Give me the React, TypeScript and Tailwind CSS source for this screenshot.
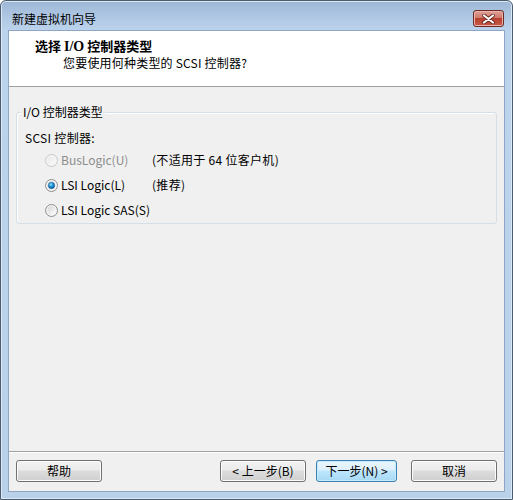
import React from "react";

const cjk = { fontFamily: '"Noto Sans CJK SC", "Noto Sans", sans-serif' };

function Radio({ checked, disabled }: { checked?: boolean; disabled?: boolean }) {
  return (
    <svg width="13" height="13" viewBox="0 0 13 13" className="shrink-0">
      <defs>
        <linearGradient id={`rg${checked ? 1 : 0}${disabled ? 1 : 0}`} x1="0" y1="0" x2="1" y2="1">
          <stop offset="0" stopColor={disabled ? "#e8e8e8" : "#d4d4d4"} />
          <stop offset="1" stopColor={disabled ? "#fbfbfb" : "#ffffff"} />
        </linearGradient>
        <radialGradient id="dot" cx="0.4" cy="0.35" r="0.7">
          <stop offset="0" stopColor="#8ee0ff" />
          <stop offset="0.5" stopColor="#1c8ed4" />
          <stop offset="1" stopColor="#0b4f8a" />
        </radialGradient>
      </defs>
      <circle cx="6.5" cy="6.5" r="6" fill={disabled ? "#f4f4f4" : "#f2f2f2"} stroke={disabled ? "#c8c8c8" : "#8e8f8f"} strokeWidth="1" />
      <circle cx="6.5" cy="6.5" r="4.2" fill={`url(#rg${checked ? 1 : 0}${disabled ? 1 : 0})`} />
      {checked && <circle cx="6.5" cy="6.5" r="3.2" fill="url(#dot)" stroke="#1d5a8c" strokeWidth="0.5" />}
    </svg>
  );
}

function Btn({ children, def, w }: { children: React.ReactNode; def?: boolean; w: string }) {
  return (
    <div
      className={`${w} h-[22px] rounded-[3px] border flex items-center justify-center text-[12px] text-black ${
        def
          ? "border-[#3c7fb1] bg-[linear-gradient(#ecf6fc_0%,#dcf0fb_45%,#bde6fd_50%,#a7d9f5_100%)] shadow-[inset_0_0_0_1px_#c5ecfc]"
          : "border-[#707070] bg-[linear-gradient(#f2f2f2_0%,#ebebeb_45%,#dddddd_50%,#cfcfcf_100%)] shadow-[inset_0_0_0_1px_#fcfcfc]"
      }`}
      style={cjk}
    >
      {children}
    </div>
  );
}

export default function App() {
  return (
    <div className="w-[513px] h-[500px] relative overflow-hidden bg-white">
      <div className="w-[513px] h-[500px] flex flex-col rounded-t-[6px] border border-[#4d5d70] bg-[linear-gradient(180deg,#9cb7d6_0px,#b4cbe6_20px,#bcd3ec_30px,#bad1ea_100%)] shadow-[inset_0_0_0_1px_#dbe8f5]">
        <div className="h-[29px] flex items-start justify-between pl-[11px] pr-[8px] shrink-0">
          <div className="pt-[10px] text-[12px] leading-[16px] text-black" style={cjk}>
            新建虚拟机向导
          </div>
          <div className="mt-[9px] w-[31px] h-[17px] rounded-[3px] border border-[#6f2a23] bg-[linear-gradient(#e0a197_0%,#cf7a6c_45%,#b8402f_50%,#c55a48_100%)] flex items-center justify-center shadow-[inset_0_0_0_1px_#e9b4ab]">
            <svg width="13" height="10" viewBox="0 0 13 10">
              <path d="M2 1.5 L11 8.5 M11 1.5 L2 8.5" stroke="#5a1f18" strokeWidth="3.6" strokeLinecap="round" />
              <path d="M2 1.5 L11 8.5 M11 1.5 L2 8.5" stroke="#ffffff" strokeWidth="2.2" strokeLinecap="round" />
            </svg>
          </div>
        </div>
        <div className="flex-1 px-[7px] pb-[7px] flex">
          <div className="flex-1 flex flex-col bg-[#f0f0f0] border border-[#8ea6c3]">
            <div className="h-[56px] bg-white border-b border-[#a0a0a0] shrink-0 relative">
              <div
                className="absolute left-[26px] top-[6px] text-[13px] font-bold leading-[18px] text-black"
                style={{ fontFamily: '"Noto Sans CJK SC", sans-serif' }}
              >
                选择 <span style={{ fontFamily: '"Liberation Serif", serif' }} className="text-[14px]">I/O</span> 控制器类型
              </div>
              <div className="absolute left-[54px] top-[24px] text-[12px] leading-[16px] text-black tracking-[0.2px]" style={cjk}>
                您要使用何种类型的 SCSI 控制器?
              </div>
            </div>
            <div className="flex-1 px-[7px] pt-[25px] flex flex-col">
              <div className="relative h-[112px] rounded-[3px] border border-[#d5dfe5] shadow-[inset_1px_1px_0_#ffffff] ">
                <div className="absolute left-[4px] -top-[10px] px-[2px] bg-[#f0f0f0] text-[12px] leading-[18px] text-black" style={cjk}>
                  I/O 控制器类型
                </div>
                <div className="pl-[8px] pt-[16px] text-[12px] leading-[18px] text-black tracking-[0.3px]" style={cjk}>
                  SCSI 控制器:
                </div>
                <div className="pl-[28px] pt-[4px] flex flex-col gap-[7px]">
                  <div className="flex items-center h-[18px]">
                    <Radio disabled />
                    <span className="ml-[3px] w-[93px] text-[12px] text-[#8d8d8d]" style={cjk}>BusLogic(U)</span>
                    <span className="-ml-[2px] text-[12px] text-black tracking-[0.3px]" style={cjk}>(不适用于 64 位客户机)</span>
                  </div>
                  <div className="flex items-center h-[18px]">
                    <Radio checked />
                    <span className="ml-[3px] w-[93px] text-[12px] text-black" style={cjk}>LSI Logic(L)</span>
                    <span className="-ml-[2px] text-[12px] text-black tracking-[0.3px]" style={cjk}>(推荐)</span>
                  </div>
                  <div className="flex items-center h-[18px]">
                    <Radio />
                    <span className="ml-[3px] text-[12px] text-black" style={cjk}>LSI Logic SAS(S)</span>
                  </div>
                </div>
              </div>
              <div className="flex-1" />
              <div className="border-t border-[#a0a0a0] shadow-[0_1px_0_#ffffff] -mx-[7px]" />
              <div className="h-[39px] flex items-center pb-[1px]">
                <Btn w="w-[86px]">帮助</Btn>
                <div className="flex-1" />
                <Btn w="w-[86px]">&lt; 上一步(B)</Btn>
                <div className="w-[10px]" />
                <Btn w="w-[81px]" def>下一步(N) &gt;</Btn>
                <div className="w-[14px]" />
                <Btn w="w-[86px]">取消</Btn>
              </div>
            </div>
          </div>
        </div>
      </div>
    </div>
  );
}
